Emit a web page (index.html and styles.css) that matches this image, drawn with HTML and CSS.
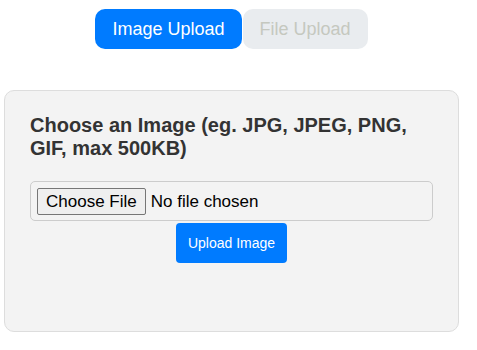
FILE: index.html
```html
<!DOCTYPE html>
<html lang="en">
<head>
  <meta charset="UTF-8" />
  <meta name="viewport" content="width=device-width, initial-scale=1.0"/>
  <title>Upload</title>
  <link rel="stylesheet" href="styles.css">
</head>
<body>

  <div class="page">
    <div class="tabs">
      <button class="tab active">Image Upload</button>
      <button class="tab">File Upload</button>
    </div>

    <div class="card">
      <h2>Choose an Image (eg. JPG, JPEG, PNG, GIF, max 500KB)</h2>
      <input class="file" type="file" accept="image/*" />
      <div class="submit-row">
        <button class="submit">Upload Image</button>
      </div>
    </div>
  </div>

</body>
</html>
```

FILE: styles.css
```css
* {
  box-sizing: border-box;
}

body {
  margin: 0;
  font-family: 'Liberation Sans', Arial, sans-serif;
  background: #fff;
  color: #333;
}

.page {
  width: 459px;
  padding: 9px 0 0 4px;
}

.tabs {
  display: flex;
  justify-content: center;
  gap: 1px;
}

.tab {
  height: 40px;
  padding: 0 17px;
  border: none;
  border-radius: 10px;
  font-family: 'Liberation Sans', Arial, sans-serif;
  font-size: 18px;
  background: #e9ecef;
  color: #c5c8bf;
  cursor: pointer;
}

.tab.active {
  background: #007bff;
  color: #fff;
}

.card {
  margin-top: 41px;
  height: 242px;
  padding: 23px 25px;
  background: #f3f3f3;
  border: 1px solid #ddd;
  border-radius: 10px;
}

.card h2 {
  margin: 0 0 21px;
  font-size: 20px;
  line-height: 23px;
  font-weight: bold;
  color: #333;
}

.file {
  display: block;
  width: 100%;
  height: 40px;
  padding: 6px;
  border: 1px solid #ccc;
  border-radius: 5px;
  font-family: 'Liberation Sans', Arial, sans-serif;
  font-size: 17px;
  color: #000;
}

.file::file-selector-button {
  height: 27px;
  padding: 0 8px;
  margin-right: 5px;
  border: 1px solid #767676;
  border-radius: 2px;
  background: #efefef;
  color: #000;
  font: inherit;
}

.submit-row {
  display: flex;
  justify-content: center;
  margin-top: 2px;
}

.submit {
  height: 40px;
  padding: 0 12px;
  border: none;
  border-radius: 4px;
  background: #007bff;
  color: #fff;
  font-family: 'Liberation Sans', Arial, sans-serif;
  font-size: 14px;
  cursor: pointer;
}
```
